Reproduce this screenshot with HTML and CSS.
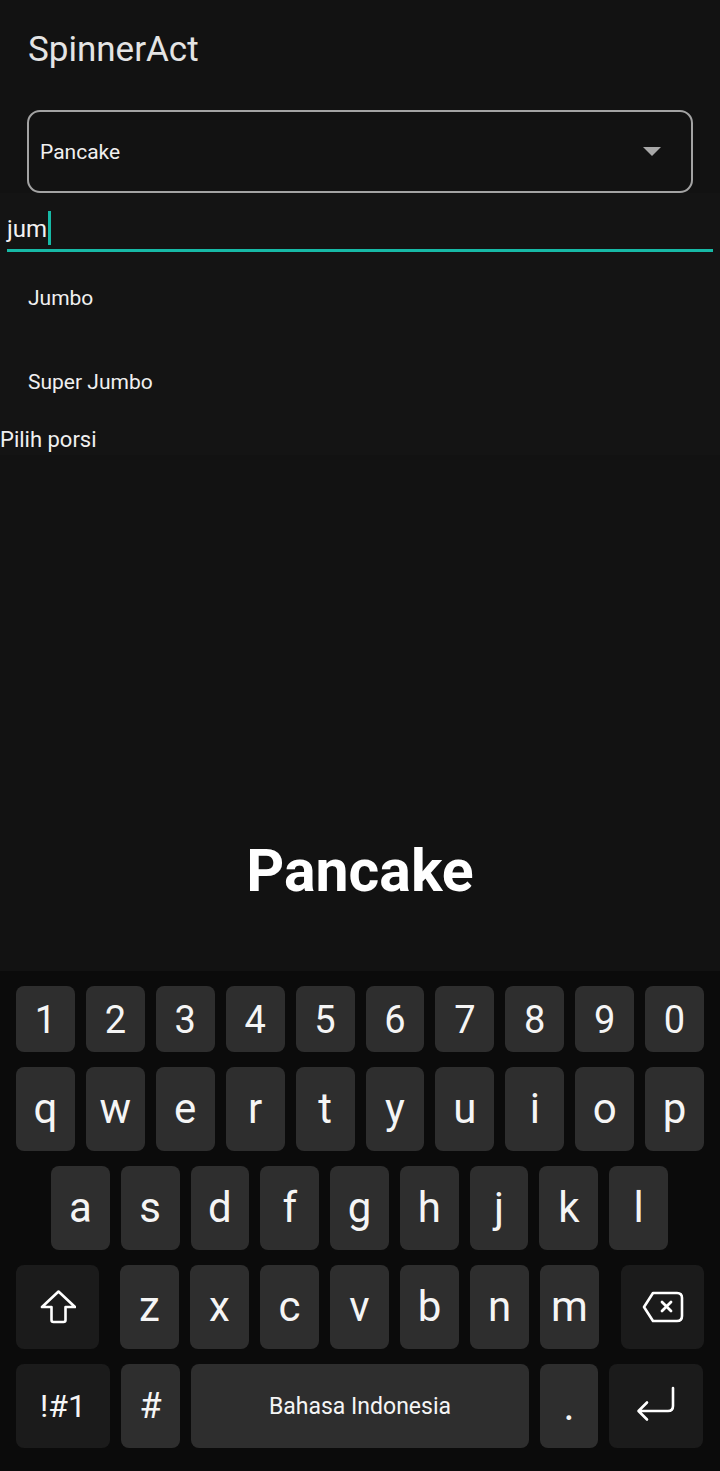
FILE: index.html
```html
<!DOCTYPE html>
<html lang="id">
<head>
<meta charset="utf-8">
<title>SpinnerAct</title>
<link rel="stylesheet" href="styles.css">
</head>
<body>
<div class="screen">
  <div class="app">
    <h1 class="title">SpinnerAct</h1>
    <div class="spinner">
      <span class="spinner-value">Pancake</span>
      <span class="spinner-arrow"></span>
    </div>
    <div class="popup">
      <div class="search">
        <span class="search-text">jum</span><span class="cursor"></span>
      </div>
      <div class="option">Jumbo</div>
      <div class="option">Super Jumbo</div>
      <div class="hint">Pilih porsi</div>
    </div>
    <div class="main">
      <div class="big">Pancake</div>
    </div>
  </div>
  <div class="keyboard">
    <div class="row row-num">
      <div class="key num">1</div><div class="key num">2</div><div class="key num">3</div><div class="key num">4</div><div class="key num">5</div><div class="key num">6</div><div class="key num">7</div><div class="key num">8</div><div class="key num">9</div><div class="key num">0</div>
    </div>
    <div class="row row-10">
      <div class="key">q</div><div class="key">w</div><div class="key">e</div><div class="key">r</div><div class="key">t</div><div class="key">y</div><div class="key">u</div><div class="key">i</div><div class="key">o</div><div class="key">p</div>
    </div>
    <div class="row row-9">
      <div class="key">a</div><div class="key">s</div><div class="key">d</div><div class="key">f</div><div class="key">g</div><div class="key">h</div><div class="key">j</div><div class="key">k</div><div class="key">l</div>
    </div>
    <div class="row row-shift">
      <div class="key special shift">
        <svg width="36" height="36" viewBox="0 0 36 36"><path d="M18.5 2.5 L2 18 L11.5 18 L11.5 31 Q11.5 33 13.5 33 L23.5 33 Q25.5 33 25.5 31 L25.5 18 L35 18 Z" fill="none" stroke="#fff" stroke-width="2.6" stroke-linejoin="round"/></svg>
      </div>
      <div class="letters7">
        <div class="key">z</div><div class="key">x</div><div class="key">c</div><div class="key">v</div><div class="key">b</div><div class="key">n</div><div class="key">m</div>
      </div>
      <div class="key special backspace">
        <svg width="42" height="32" viewBox="0 0 42 32"><path d="M11 2 L35 2 Q40 2 40 7 L40 25 Q40 30 35 30 L11 30 L2 16 Z" fill="none" stroke="#fff" stroke-width="2.6" stroke-linejoin="round"/><path d="M20 11 L29 20 M29 11 L20 20" stroke="#fff" stroke-width="2.8" stroke-linecap="round"/></svg>
      </div>
    </div>
    <div class="row row-bottom">
      <div class="key special sym">!#1</div>
      <div class="key hash">#</div>
      <div class="key space">Bahasa Indonesia</div>
      <div class="key">.</div>
      <div class="key special enter">
        <svg width="42" height="42" viewBox="0 0 42 42"><path d="M38 3 L38 21 Q38 26 33 26 L4 26 M12 17.5 L3.5 26 L12 34.5" fill="none" stroke="#fff" stroke-width="2.6" stroke-linecap="round" stroke-linejoin="round"/></svg>
      </div>
    </div>
  </div>
</div>
</body>
</html>
```

FILE: styles.css
```css
* { box-sizing: border-box; }
html, body {
  margin: 0;
  padding: 0;
  background: #121212;
}
body {
  font-family: Roboto, "Noto Sans", "Liberation Sans", sans-serif;
  color: #f2f2f2;
}
.screen {
  width: 720px;
  height: 1471px;
  display: flex;
  flex-direction: column;
  overflow: hidden;
}
.app {
  flex: 1;
  display: flex;
  flex-direction: column;
}
.title {
  margin: 0;
  padding: 30px 28px 0;
  font-size: 35px;
  line-height: 40px;
  font-weight: 400;
  color: #e4e4e4;
}
.spinner {
  margin: 40px 27px 0;
  height: 83px;
  border: 2px solid #a3a3a3;
  border-radius: 13px;
  display: flex;
  align-items: center;
  justify-content: space-between;
  padding: 0 30px 0 11px;
}
.spinner-value {
  font-size: 21px;
  color: #f0f0f0;
}
.spinner-arrow {
  width: 0;
  height: 0;
  border-left: 9px solid transparent;
  border-right: 9px solid transparent;
  border-top: 9px solid #a8a8a8;
}
.popup {
  background: #141414;
  display: flex;
  flex-direction: column;
  padding-top: 3px;
}
.search {
  margin: 0 7px;
  height: 56px;
  border-bottom: 3px solid #17b9a6;
  display: flex;
  align-items: flex-end;
  padding-bottom: 5px;
}
.search-text {
  font-size: 24px;
  line-height: 30px;
  color: #f2f2f2;
}
.cursor {
  width: 3px;
  height: 34px;
  background: #17b9a6;
  margin-left: 1px;
  margin-bottom: -1px;
}
.option {
  height: 84px;
  display: flex;
  align-items: center;
  padding-left: 28px;
  font-size: 21px;
  color: #f0f0f0;
}
.search + .option { margin-top: 4px; }
.hint {
  font-size: 22px;
  line-height: 30px;
  padding-top: 1px;
  color: #f0f0f0;
}
.main {
  flex: 1;
  display: flex;
  flex-direction: column;
  justify-content: flex-end;
  align-items: center;
  padding-bottom: 65px;
  background: #121212;
}
.big {
  font-size: 59px;
  line-height: 70px;
  font-weight: 700;
  color: #ffffff;
}
.keyboard {
  height: 500px;
  flex: none;
  background: #0b0b0b;
  padding: 15px 16px 0;
  display: flex;
  flex-direction: column;
  gap: 15px;
}
.row {
  height: 84px;
  display: grid;
  gap: 11px;
}
.row-num {
  height: 66px;
  grid-template-columns: repeat(10, 1fr);
}
.row-10 { grid-template-columns: repeat(10, 1fr); }
.row-9 {
  grid-template-columns: repeat(9, 1fr);
  padding: 0 36px 0 35px;
}
.row-shift {
  display: flex;
  gap: 0;
}
.letters7 {
  flex: 1;
  display: grid;
  grid-template-columns: repeat(7, 1fr);
  gap: 11px;
  margin: 0 22px 0 21px;
}
.row-bottom {
  grid-template-columns: 94px 59px 338px 58px 94px;
}
.key {
  background: #2e2e2e;
  border-radius: 8px;
  display: flex;
  align-items: center;
  justify-content: center;
  font-size: 42px;
  color: #f5f5f5;
  line-height: 1;
}
.key.num {
  font-size: 38px;
  padding-top: 2px;
}
.key.special {
  background: #1b1b1b;
}
.shift, .backspace {
  width: 83px;
  flex: none;
}
.sym {
  font-size: 32px;
}
.hash {
  font-size: 36px;
}
.space {
  font-size: 23px;
}
```
